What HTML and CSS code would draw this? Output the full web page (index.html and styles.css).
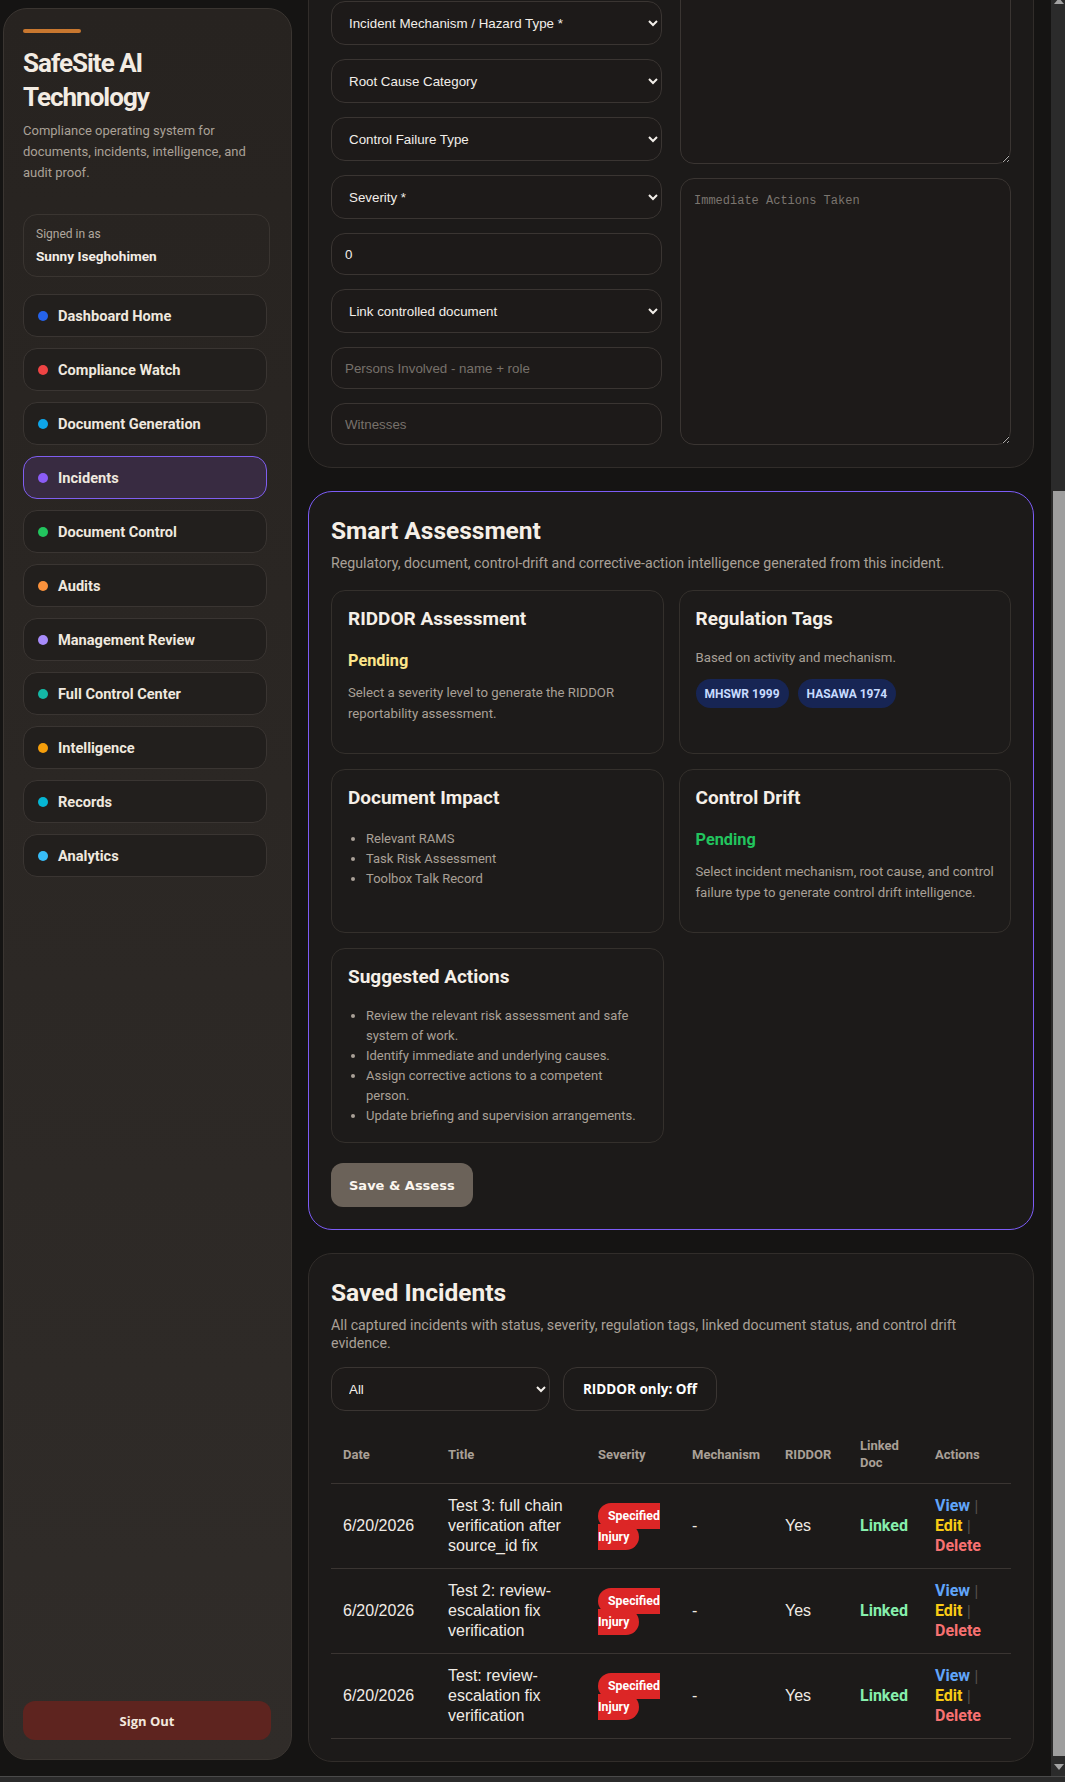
FILE: index.html
```html
<!DOCTYPE html>
<html lang="en">
<head>
    <meta charset="utf-8">
    <title>Incidents - SafeSite AI Technology</title>
    <link rel="stylesheet" href="styles.css">
</head>
<body>
<div class="app">
    <aside class="sidebar">
        <div class="accent"></div>
        <h1 class="brand">SafeSite AI Technology</h1>
        <p class="tagline">Compliance operating system for documents, incidents, intelligence, and audit proof.</p>

        <div class="signed">
            <div class="signed-label">Signed in as</div>
            <div class="signed-name">Sunny Iseghohimen</div>
        </div>

        <nav class="nav">
            <a class="nav-item"><span class="dot blue"></span>Dashboard Home</a>
            <a class="nav-item"><span class="dot red"></span>Compliance Watch</a>
            <a class="nav-item"><span class="dot sky"></span>Document Generation</a>
            <a class="nav-item active"><span class="dot violet"></span>Incidents</a>
            <a class="nav-item"><span class="dot green"></span>Document Control</a>
            <a class="nav-item"><span class="dot orange"></span>Audits</a>
            <a class="nav-item"><span class="dot lavender"></span>Management Review</a>
            <a class="nav-item"><span class="dot teal"></span>Full Control Center</a>
            <a class="nav-item"><span class="dot amber"></span>Intelligence</a>
            <a class="nav-item"><span class="dot cyan"></span>Records</a>
            <a class="nav-item"><span class="dot light"></span>Analytics</a>
        </nav>

        <button class="signout">Sign Out</button>
    </aside>

    <main class="main">
        <!-- incident form, scrolled part way -->
        <section class="card form-card">
            <div class="form-cols">
                <div class="form-col">
                    <select class="field"><option>Site / Project</option></select>
                    <select class="field"><option>Activity Type</option></select>
                    <select class="field"><option>Incident Type</option></select>
                    <select class="field"><option>Incident Mechanism / Hazard Type *</option></select>
                    <select class="field"><option>Root Cause Category</option></select>
                    <select class="field"><option>Control Failure Type</option></select>
                    <select class="field"><option>Severity *</option></select>
                    <input class="field input" type="number" value="0">
                    <select class="field"><option>Link controlled document</option></select>
                    <input class="field input" type="text" placeholder="Persons Involved - name + role">
                    <input class="field input" type="text" placeholder="Witnesses">
                </div>
                <div class="form-col">
                    <textarea class="notes notes-desc" placeholder="Description"></textarea>
                    <textarea class="notes notes-actions" placeholder="Immediate Actions Taken"></textarea>
                </div>
            </div>
        </section>

        <section class="card smart">
            <h2 class="card-title">Smart Assessment</h2>
            <p class="card-sub">Regulatory, document, control-drift and corrective-action intelligence generated from this incident.</p>

            <div class="insights">
                <div class="insight">
                    <h3>RIDDOR Assessment</h3>
                    <div class="status pending">Pending</div>
                    <p>Select a severity level to generate the RIDDOR reportability assessment.</p>
                </div>
                <div class="insight">
                    <h3>Regulation Tags</h3>
                    <p class="based">Based on activity and mechanism.</p>
                    <div class="tags">
                        <span class="tag">MHSWR 1999</span>
                        <span class="tag">HASAWA 1974</span>
                    </div>
                </div>
                <div class="insight">
                    <h3>Document Impact</h3>
                    <ul>
                        <li>Relevant RAMS</li>
                        <li>Task Risk Assessment</li>
                        <li>Toolbox Talk Record</li>
                    </ul>
                </div>
                <div class="insight">
                    <h3>Control Drift</h3>
                    <div class="status drift">Pending</div>
                    <p>Select incident mechanism, root cause, and control failure type to generate control drift intelligence.</p>
                </div>
                <div class="insight">
                    <h3>Suggested Actions</h3>
                    <ul class="actions-list">
                        <li>Review the relevant risk assessment and safe system of work.</li>
                        <li>Identify immediate and underlying causes.</li>
                        <li>Assign corrective actions to a competent person.</li>
                        <li>Update briefing and supervision arrangements.</li>
                    </ul>
                </div>
            </div>

            <button class="save">Save &amp; Assess</button>
        </section>

        <section class="card saved">
            <h2 class="card-title">Saved Incidents</h2>
            <p class="card-sub">All captured incidents with status, severity, regulation tags, linked document status, and control drift evidence.</p>

            <div class="filters">
                <select class="field filter-select"><option>All</option></select>
                <button class="toggle">RIDDOR only: Off</button>
            </div>

            <table class="incidents">
                <colgroup>
                    <col style="width:105px">
                    <col style="width:150px">
                    <col style="width:94px">
                    <col style="width:93px">
                    <col style="width:75px">
                    <col style="width:75px">
                    <col style="width:88px">
                </colgroup>
                <thead>
                <tr>
                    <th>Date</th>
                    <th>Title</th>
                    <th>Severity</th>
                    <th>Mechanism</th>
                    <th>RIDDOR</th>
                    <th>Linked Doc</th>
                    <th>Actions</th>
                </tr>
                </thead>
                <tbody>
                <tr>
                    <td>6/20/2026</td>
                    <td>Test 3: full chain verification after source_id fix</td>
                    <td><span class="sev">Specified Injury</span></td>
                    <td>-</td>
                    <td>Yes</td>
                    <td class="linked">Linked</td>
                    <td class="row-actions"><a class="view">View</a> <span class="sep">|</span> <a class="edit">Edit</a> <span class="sep">|</span> <a class="del">Delete</a></td>
                </tr>
                <tr>
                    <td>6/20/2026</td>
                    <td>Test 2: review-escalation fix verification</td>
                    <td><span class="sev">Specified Injury</span></td>
                    <td>-</td>
                    <td>Yes</td>
                    <td class="linked">Linked</td>
                    <td class="row-actions"><a class="view">View</a> <span class="sep">|</span> <a class="edit">Edit</a> <span class="sep">|</span> <a class="del">Delete</a></td>
                </tr>
                <tr>
                    <td>6/20/2026</td>
                    <td>Test: review-escalation fix verification</td>
                    <td><span class="sev">Specified Injury</span></td>
                    <td>-</td>
                    <td>Yes</td>
                    <td class="linked">Linked</td>
                    <td class="row-actions"><a class="view">View</a> <span class="sep">|</span> <a class="edit">Edit</a> <span class="sep">|</span> <a class="del">Delete</a></td>
                </tr>
                </tbody>
            </table>
        </section>
    </main>
</div>

<div class="scrollbar">
    <span class="arrow up"></span>
    <span class="thumb"></span>
    <span class="arrow down"></span>
</div>
<div class="hbar"></div>
</body>
</html>
```

FILE: styles.css
```css
* {
    box-sizing: border-box;
}

html,
body {
    margin: 0;
    background: #151413;
}

body {
    font-family: "Roboto", "Noto Sans", sans-serif;
    color: #efe8df;
    overflow: hidden;
}

.app {
    display: grid;
    grid-template-columns: 289px 726px;
    column-gap: 16px;
    align-items: start;
    padding: 8px 0 0 3px;
}

/* sidebar */
.sidebar {
    height: 1752px;
    display: flex;
    flex-direction: column;
    background: linear-gradient(180deg, #272320, #302c29);
    border: 1px solid #3a3531;
    border-radius: 24px;
    padding: 20px 19px 19px;
}

.accent {
    width: 58px;
    height: 4px;
    border-radius: 2px;
    background: #c8772f;
    margin-bottom: 13px;
}

.brand {
    margin: 0;
    font-size: 26px;
    line-height: 34px;
    font-weight: 700;
    color: #f3ece3;
    letter-spacing: -1px;
}

.tagline {
    margin: 6px 0 0;
    font-size: 13px;
    line-height: 21px;
    color: #aaa197;
}

.signed {
    margin: 31px 2px 0 0;
    border: 1px solid #3a3531;
    border-radius: 14px;
    padding: 11px 12px 10px;
}

.signed-label {
    font-size: 12px;
    line-height: 17px;
    color: #b1a89e;
}

.signed-name {
    margin-top: 4px;
    font-size: 13.6px;
    line-height: 19px;
    font-weight: 700;
    color: #f3ede6;
}

.nav {
    margin: 17px 5px 0 0;
    display: flex;
    flex-direction: column;
    gap: 11px;
}

.nav-item {
    height: 43px;
    display: flex;
    align-items: center;
    gap: 10px;
    padding: 0 14px;
    background: #221f1d;
    border: 1px solid #3a3532;
    border-radius: 14px;
    font-size: 14.6px;
    font-weight: 700;
    color: #efe8df;
}

.nav-item.active {
    background: #382b41;
    border-color: #7f5ef0;
}

.dot {
    width: 10px;
    height: 10px;
    border-radius: 50%;
}

.dot.blue { background: #2563eb; }
.dot.red { background: #ef4444; }
.dot.sky { background: #0ea5e9; }
.dot.violet { background: #8b5cf6; }
.dot.green { background: #22c55e; }
.dot.orange { background: #fb923c; }
.dot.lavender { background: #a78bfa; }
.dot.teal { background: #14b8a6; }
.dot.amber { background: #f59e0b; }
.dot.cyan { background: #06b6d4; }
.dot.light { background: #38bdf8; }

.signout {
    margin-top: auto;
    height: 39px;
    width: 248px;
    border: 0;
    border-radius: 12px;
    background: #5e241f;
    color: #f3e8de;
    font-family: "Open Sans", sans-serif;
    font-size: 13px;
    font-weight: 700;
}

/* main column */
.main {
    display: flex;
    flex-direction: column;
    gap: 23px;
    margin-top: -204px;
}

.card {
    background: #1c1a19;
    border: 1px solid #312d2a;
    border-radius: 24px;
    padding: 22px;
}

.form-cols {
    display: grid;
    grid-template-columns: 1fr 1fr;
    gap: 18px;
}

.form-col {
    display: flex;
    flex-direction: column;
    gap: 14px;
}

.field {
    height: 44px;
    width: 100%;
    border: 1px solid #3a3532;
    border-radius: 14px;
    background: #1d1a19;
    color: #f2eee9;
    font-family: "Liberation Sans", Arial, sans-serif;
    font-size: 13.33px;
    padding: 0 6px 0 13px;
    color-scheme: dark;
}

.field.input {
    height: 42px;
}

.field::placeholder {
    color: #77716b;
}

.notes {
    width: 100%;
    border: 1px solid #3a3532;
    border-radius: 14px;
    background: #1d1a19;
    color: #f2eee9;
    font-family: "Liberation Mono", monospace;
    font-size: 12px;
    padding: 15px 13px 14px;
    resize: vertical;
    color-scheme: dark;
}

.notes::placeholder {
    color: #7b756f;
}

.notes-desc {
    height: 337px;
}

.notes-actions {
    height: 267px;
}

.smart {
    border-color: #7c5cf6;
}

.card-title {
    margin: 3px 0 0;
    font-size: 24.5px;
    line-height: 28.8px;
    font-weight: 700;
    color: #f5efe7;
}

.card-sub {
    margin: 8px 0 0;
    font-size: 14.2px;
    line-height: 18.2px;
    color: #a9a097;
}

.insights {
    margin-top: 18px;
    display: grid;
    grid-template-columns: 1fr 1fr;
    gap: 15px;
}

.insight {
    border: 1px solid #34302c;
    border-radius: 14px;
    background: #1d1b1a;
    padding: 16px 16px;
}

.insight h3 {
    margin: 0;
    font-size: 19px;
    line-height: 24px;
    font-weight: 700;
    color: #f5efe7;
}

.status {
    margin-top: 19px;
    font-size: 16.3px;
    line-height: 21px;
    font-weight: 700;
}

.status.pending { color: #fde68a; }
.status.drift { color: #22c55e; }

.insight p {
    margin: 11px 0 13px;
    font-size: 13.2px;
    line-height: 21px;
    color: #a9a097;
}

.insight p.based {
    margin: 16px 0 0;
}

.tags {
    margin-top: 11px;
    display: flex;
    gap: 9px;
}

.tag {
    height: 29px;
    display: inline-flex;
    align-items: center;
    padding: 0 9px;
    border-radius: 999px;
    background: #172554;
    color: #c7dbff;
    font-size: 12px;
    font-weight: 700;
}

.insight ul {
    margin: 19px 0 0;
    padding-left: 18px;
    font-size: 13px;
    line-height: 20px;
    color: #a9a097;
}

.insight ul.actions-list {
    margin-top: 17px;
}

.save {
    margin-top: 20px;
    height: 44px;
    padding: 0 18px;
    border: 0;
    border-radius: 12px;
    background: #6b6259;
    color: #fbf6f0;
    font-family: "DejaVu Sans", Verdana, sans-serif;
    font-size: 13px;
    font-weight: 700;
}

/* saved incidents */
.filters {
    margin-top: 15px;
    display: flex;
    gap: 13px;
}

.filter-select {
    width: 219px;
}

.toggle {
    height: 44px;
    width: 154px;
    border: 1px solid #3a3532;
    border-radius: 14px;
    background: #1c1a19;
    color: #ffffff;
    font-family: "Open Sans", sans-serif;
    font-size: 13.5px;
    font-weight: 700;
}

.incidents {
    margin-top: 14px;
    width: 100%;
    table-layout: fixed;
    border-collapse: collapse;
}

.incidents th {
    text-align: left;
    padding: 12px;
    font-size: 13px;
    line-height: 17px;
    font-weight: 700;
    color: #a9a097;
    border-bottom: 1px solid #3a3532;
    vertical-align: middle;
}

.incidents td {
    padding: 12px;
    font-family: "Liberation Sans", Arial, sans-serif;
    font-size: 16px;
    line-height: 20px;
    color: #f0ebe5;
    border-bottom: 1px solid #3a3532;
    vertical-align: middle;
}

.sev {
    background: #dc2626;
    color: #ffffff;
    font-family: "Roboto", sans-serif;
    font-size: 12.3px;
    font-weight: 700;
    padding: 6px 10px;
    border-radius: 999px;
}

.incidents td.linked {
    font-family: "Roboto", sans-serif;
    font-size: 16px;
    font-weight: 700;
    color: #86efac;
}

.row-actions a {
    font-family: "Roboto", sans-serif;
    font-size: 16px;
    font-weight: 700;
}

.row-actions .view { color: #60a5fa; }
.row-actions .edit { color: #facc15; }
.row-actions .del { color: #f87171; }

.row-actions .sep {
    color: #55504b;
    font-size: 14px;
}

/* window scrollbars, drawn over the page */
.scrollbar {
    position: fixed;
    top: 0;
    right: 0;
    width: 14px;
    height: 1776px;
    background: #2b2b2b;
}

.thumb {
    position: absolute;
    top: 491px;
    left: 2px;
    right: 0;
    height: 1265px;
    background: #9e9e9e;
}

.arrow {
    position: absolute;
    left: 3px;
    width: 0;
    height: 0;
    border-left: 5px solid transparent;
    border-right: 5px solid transparent;
}

.arrow.up {
    top: -2px;
    border-bottom: 6px solid #a3a3a3;
}

.arrow.down {
    bottom: 6px;
    border-top: 6px solid #a3a3a3;
}

.hbar {
    position: fixed;
    left: 0;
    right: 0;
    bottom: 0;
    height: 6px;
    background: #2b2b2b;
    border-top: 1px solid #4a4a4a;
}
```
